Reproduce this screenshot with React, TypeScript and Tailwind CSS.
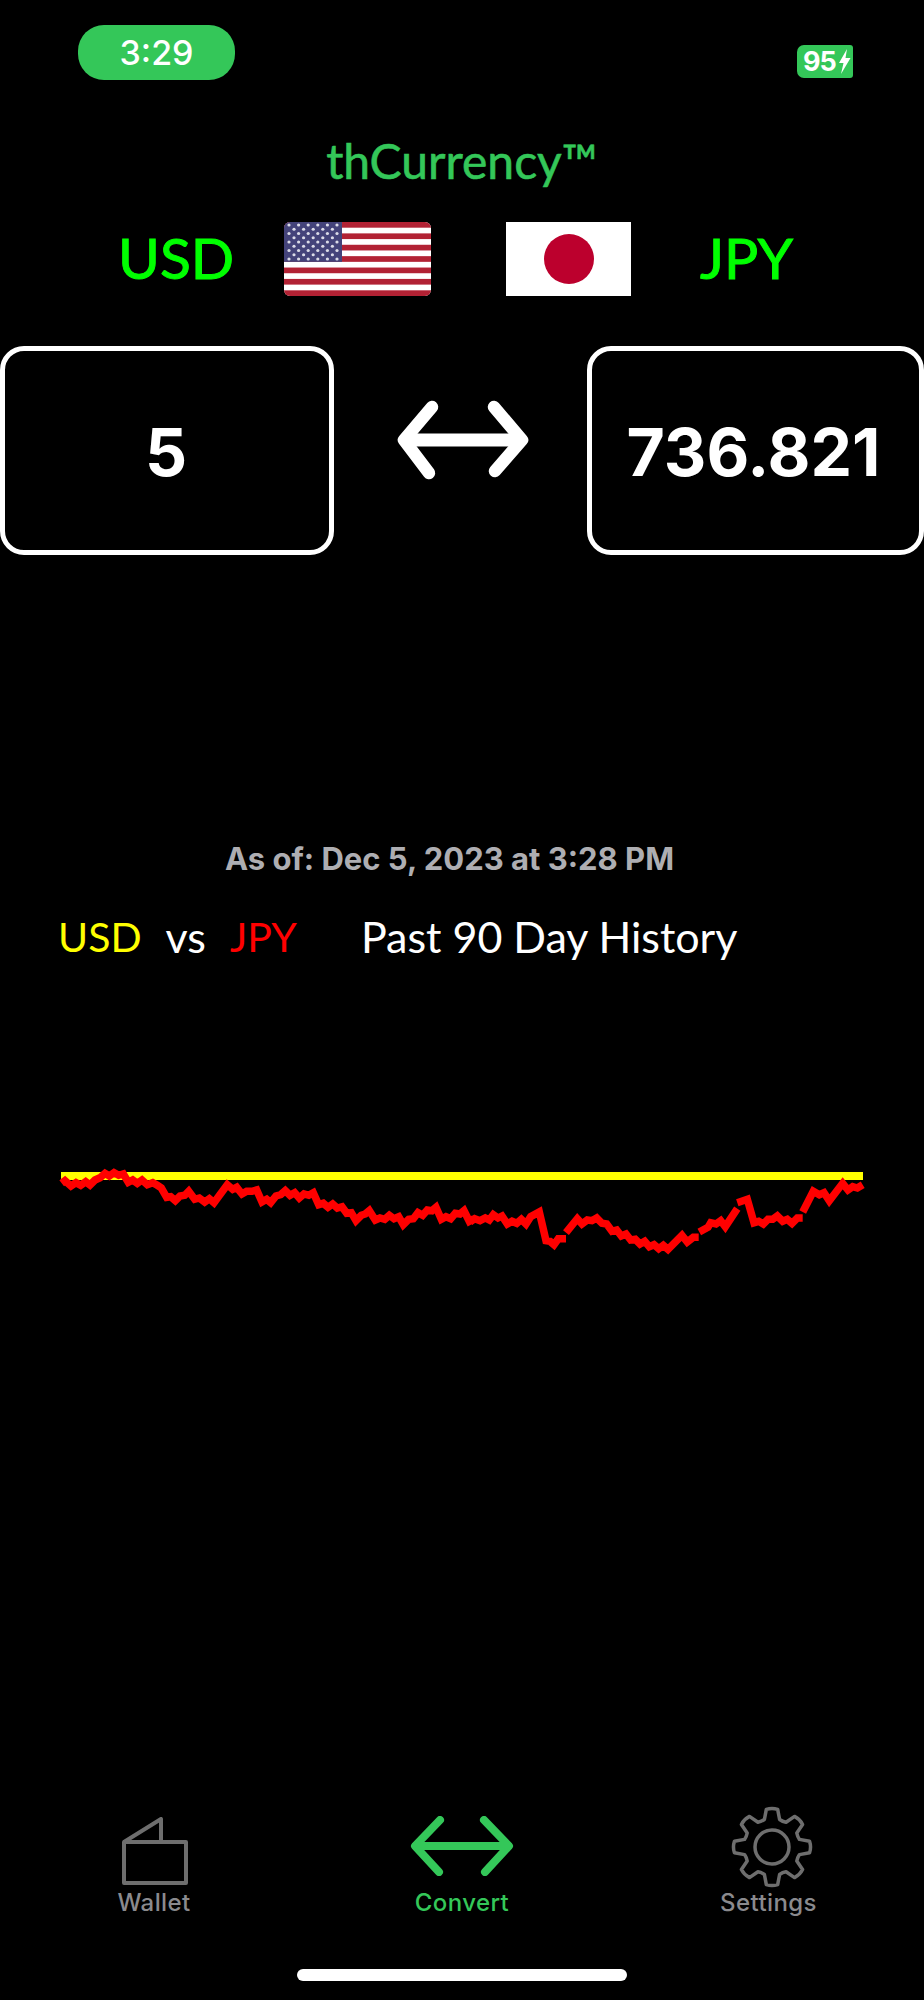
const z4: [number, number][] = [[65,100],[75,92],[93,108],[108,98],[122,106],[137,95],[150,105],[165,90],[180,83],[195,70],[208,78],[222,68],[236,76],[250,72],[265,97],[278,90],[292,100],[306,90],[322,104],[338,98],[352,106],[364,114],[380,142],[392,140],[406,152],[420,138],[434,136],[446,124],[464,148],[478,144],[494,156],[508,146],[522,158],[562,104],[578,118],[590,112],[606,132],[620,124],[636,124],[650,120],[666,156],[680,148],[692,158],[708,138],[722,134],[736,122],[750,136],[764,128],[778,144],[792,132],[806,136],[820,128],[836,164],[850,160],[864,172],[878,162],[892,174],[906,170],[920,190],[934,188],[948,212],[964,196],[976,192],[988,182],[1006,210],[1020,204],[1034,208],[1048,196],[1062,206],[1076,200],[1090,224],[1106,208],[1120,206],[1134,188],[1148,196],[1162,180],[1176,182],[1188,172],[1204,208],[1218,200],[1232,206],[1246,190],[1260,192],[1272,182],[1288,214],[1302,206]];
const z5a: [number, number][] = [[0,216],[14,206],[30,212],[46,204],[58,210],[70,194],[84,204],[96,198],[112,222],[126,214],[140,220],[154,208],[168,222],[182,200],[208,186],[228,272],[240,274],[252,284],[265,266],[288,266]];
const z5b: [number, number][] = [[288,248],[322,206],[336,222],[352,210],[366,212],[380,204],[396,220],[410,222],[426,244],[440,240],[454,258],[468,252],[482,270],[496,268],[510,282],[524,274],[538,290],[552,284],[566,296],[580,286],[594,298],[620,272],[636,256],[652,276],[670,262],[686,262]];
const z5c: [number, number][] = [[688,246],[714,232],[722,218],[738,222],[752,212],[766,230],[802,176]];
const z5e: [number, number][] = [[802,158],[832,148],[852,218],[866,214],[880,222],[894,208],[908,208],[922,198],[938,214],[952,208],[966,220],[982,204],[998,204]];
const z5f: [number, number][] = [[998,186],[1030,124],[1048,134],[1062,128],[1078,152],[1118,100],[1134,120],[1148,110],[1162,114],[1178,104]];

const CHART_TOP = 1160;
const toPts = (arr: [number, number][], ox: number) =>
  arr.map(([x, y]) => `${(ox + x / 3).toFixed(1)},${(1150 + y / 3 - CHART_TOP).toFixed(1)}`).join(" ");
const parts = [toPts(z4, 40) + " " + toPts(z5a, 470), toPts(z5b, 470), toPts(z5c, 470), toPts(z5e, 470), toPts(z5f, 470)];

function gearPath(cx: number, cy: number) {
  const teeth = 8;
  const rOut = 38;
  const rIn = 28.5;
  const pts: string[] = [];
  for (let i = 0; i < teeth; i++) {
    const a = (i * 2 * Math.PI) / teeth - Math.PI / 2;
    const p = (r: number, d: number) =>
      `${(cx + r * Math.cos(a + d)).toFixed(2)} ${(cy + r * Math.sin(a + d)).toFixed(2)}`;
    pts.push(i === 0 ? `M${p(rIn, -0.27)}` : `L${p(rIn, -0.27)}`);
    pts.push(`L${p(rOut, -0.15)}`);
    pts.push(`Q${p(rOut + 1.5, 0)} ${p(rOut, 0.15)}`);
    pts.push(`L${p(rIn, 0.27)}`);
    const b = a + Math.PI / teeth;
    const rv = rIn - 1;
    pts.push(`Q${(cx + rv * Math.cos(b)).toFixed(2)} ${(cy + rv * Math.sin(b)).toFixed(2)} ${(cx + rIn * Math.cos(a + 2 * Math.PI / teeth - 0.27)).toFixed(2)} ${(cy + rIn * Math.sin(a + 2 * Math.PI / teeth - 0.27)).toFixed(2)}`);
  }
  return pts.join(" ") + "Z";
}

function UsFlag() {
  const stripes = Array.from({ length: 13 }, (_, i) => i);
  const stars: [number, number][] = [];
  for (let r = 0; r < 9; r++) {
    const n = r % 2 === 0 ? 6 : 5;
    for (let c = 0; c < n; c++) {
      stars.push([(r % 2 === 0 ? 5 : 10) + c * 9.6, 3 + r * 4.25]);
    }
  }
  return (
    <svg width="147" height="74" viewBox="0 0 147 74" className="block">
      <defs>
        <clipPath id="flagClip">
          <rect width="147" height="74" rx="6" />
        </clipPath>
      </defs>
      <g clipPath="url(#flagClip)">
        <rect width="147" height="74" fill="#fff" />
        {stripes.filter((i) => i % 2 === 0).map((i) => (
          <rect key={i} y={(i * 74) / 13} width="147" height={74 / 13} fill="#b22234" />
        ))}
        <rect width="58" height={(7 * 74) / 13} fill="#44437a" />
        {stars.map(([x, y], i) => (
          <circle key={i} cx={x} cy={y} r="1.6" fill="#dcdce8" />
        ))}
      </g>
    </svg>
  );
}

function BigArrow() {
  return (
    <svg width="138" height="84" viewBox="0 0 138 84" className="block">
      <g fill="none" stroke="#fff" strokeWidth="13" strokeLinecap="round" strokeLinejoin="round">
        <path d="M40 9 L12 42 L37 75" strokeWidth="12.5" />
        <path d="M102 9 L130 42 L103 73" strokeWidth="12.5" />
        <path d="M14 42 H128" strokeLinecap="butt" />
      </g>
    </svg>
  );
}

const sf = "font-['Inter','Liberation_Sans',sans-serif]";

export default function App() {
  return (
    <div className="flex h-[2000px] w-[924px] flex-col overflow-hidden bg-black font-['Lato','Liberation_Sans',sans-serif]">
      {/* status bar */}
      <div className="mt-[25px] flex h-[55px] items-start justify-between pl-[78px] pr-[71px]">
        <div className={`flex h-[55px] w-[157px] items-center justify-center rounded-[26px] bg-[#34c759] text-[34px] font-medium text-white ${sf}`}>
          3:29
        </div>
        <div className="mt-[20px] flex h-[33px] w-[56px] items-center rounded-l-[7px] rounded-r-[3px] bg-[#34c759] pl-[6px]">
          <span className={`text-[27px] leading-none font-bold tracking-[-1px] text-white ${sf}`}>95</span>
          <svg width="13" height="25" viewBox="0 0 13 25" className="ml-[2px]">
            <path d="M9 0 L1 14 H5.5 L3 25 L12.5 9 H7.5 Z" fill="#fff" />
          </svg>
        </div>
      </div>

      {/* title */}
      <div className="mt-[56px] mb-[1px] flex h-[50px] items-center justify-center text-[48px] leading-none text-[#34c759] [-webkit-text-stroke:0.6px_#34c759]">
        thCurrency™
      </div>

      {/* currencies */}
      <div className="mt-[35px] flex h-[74px] items-center">
        <div className="ml-[118px] mb-[4px] w-[113px] text-center text-[57px] leading-none text-[#00ff00] [-webkit-text-stroke:1px_#00ff00]">USD</div>
        <div className="ml-[53px]"><UsFlag /></div>
        <div className="relative ml-[75px] h-[74px] w-[125px] bg-white">
          <div className="absolute left-[38px] top-[12px] h-[50px] w-[50px] rounded-full bg-[#bc002d]" />
        </div>
        <div className="ml-[66px] mb-[4px] w-[99px] text-center text-[57px] leading-none text-[#00ff00] [-webkit-text-stroke:1px_#00ff00]">JPY</div>
      </div>

      {/* converter */}
      <div className="mt-[50px] flex h-[209px] items-center justify-between">
        <div className={`flex h-[209px] w-[334px] items-center justify-center rounded-[24px] border-[5px] border-white pt-[3px] pr-[2px] text-[66px] font-bold text-white ${sf}`}>5</div>
        <div className="mb-[22px]"><BigArrow /></div>
        <div className={`flex h-[209px] w-[337px] items-center justify-center rounded-[24px] border-[5px] border-white pt-[3px] pr-[4px] text-[66px] font-bold text-white ${sf}`}>736.821</div>
      </div>

      {/* as of */}
      <div className={`mt-[283px] flex h-[40px] items-center justify-center pr-[25px] text-[31px] font-bold leading-none text-[#aeaeb2] ${sf}`}>
        As of: Dec 5, 2023 at 3:28 PM
      </div>

      {/* legend */}
      <div className="mt-[33px] flex h-[50px] items-center text-[43px] leading-none text-white">
        <span className="ml-[58px] text-[41px] text-[#ffff00]">USD</span>
        <span className="ml-[24px]">vs</span>
        <span className="ml-[24px] text-[41px] text-[#ff0000]">JPY</span>
        <span className="ml-[64px]">Past 90 Day History</span>
      </div>

      {/* chart */}
      <svg width="924" height="110" viewBox="0 0 924 110" className="mt-[199px] block">
        <rect x="61" y="12" width="802" height="8" fill="#ffff00" />
        {parts.map((p, i) => (
          <polyline key={i} points={p} fill="none" stroke="#ff0000" strokeWidth="7.5" strokeLinejoin="miter" />
        ))}
      </svg>

      {/* tab bar */}
      <div className={`mt-[536px] grid h-[104px] grid-cols-3 text-[24px] font-medium leading-none tracking-[0.4px] ${sf}`}>
        <div className="flex flex-col items-center text-[#8a8a8e]">
          <div className="h-[85px] pt-[11px] pl-[2px]">
            <svg width="66" height="68" viewBox="0 0 66 68" className="block">
              <path d="M2 25 H64 V66 H2 Z M2 25 L39 2 V25" fill="none" stroke="#6e6e6e" strokeWidth="4" strokeLinejoin="round" />
            </svg>
          </div>
          <span>Wallet</span>
        </div>
        <div className="flex flex-col items-center text-[#34c759]">
          <div className="h-[85px] pt-[10px]">
            <svg width="104" height="60" viewBox="0 0 104 60" className="block">
              <g fill="none" stroke="#34c759" strokeWidth="8" strokeLinecap="round" strokeLinejoin="round">
                <path d="M30 4 L5 30 L29 56" />
                <path d="M74 4 L99 30 L75 56" />
                <path d="M6 30 H98" />
              </g>
            </svg>
          </div>
          <span>Convert</span>
        </div>
        <div className="flex flex-col items-center text-[#8a8a8e]">
          <div className="h-[85px] pl-[4px]">
            <svg width="84" height="84" viewBox="0 0 84 84" className="block">
              <g fill="none" stroke="#6e6e6e" strokeWidth="3.5" strokeLinejoin="round">
                <path d={gearPath(42, 41)} />
                <circle cx="42" cy="41" r="17" />
              </g>
            </svg>
          </div>
          <span className="-ml-[3px]">Settings</span>
        </div>
      </div>

      {/* home indicator */}
      <div className="mt-[59px] ml-[297px] h-[12px] w-[330px] rounded-full bg-white" />
    </div>
  );
}
